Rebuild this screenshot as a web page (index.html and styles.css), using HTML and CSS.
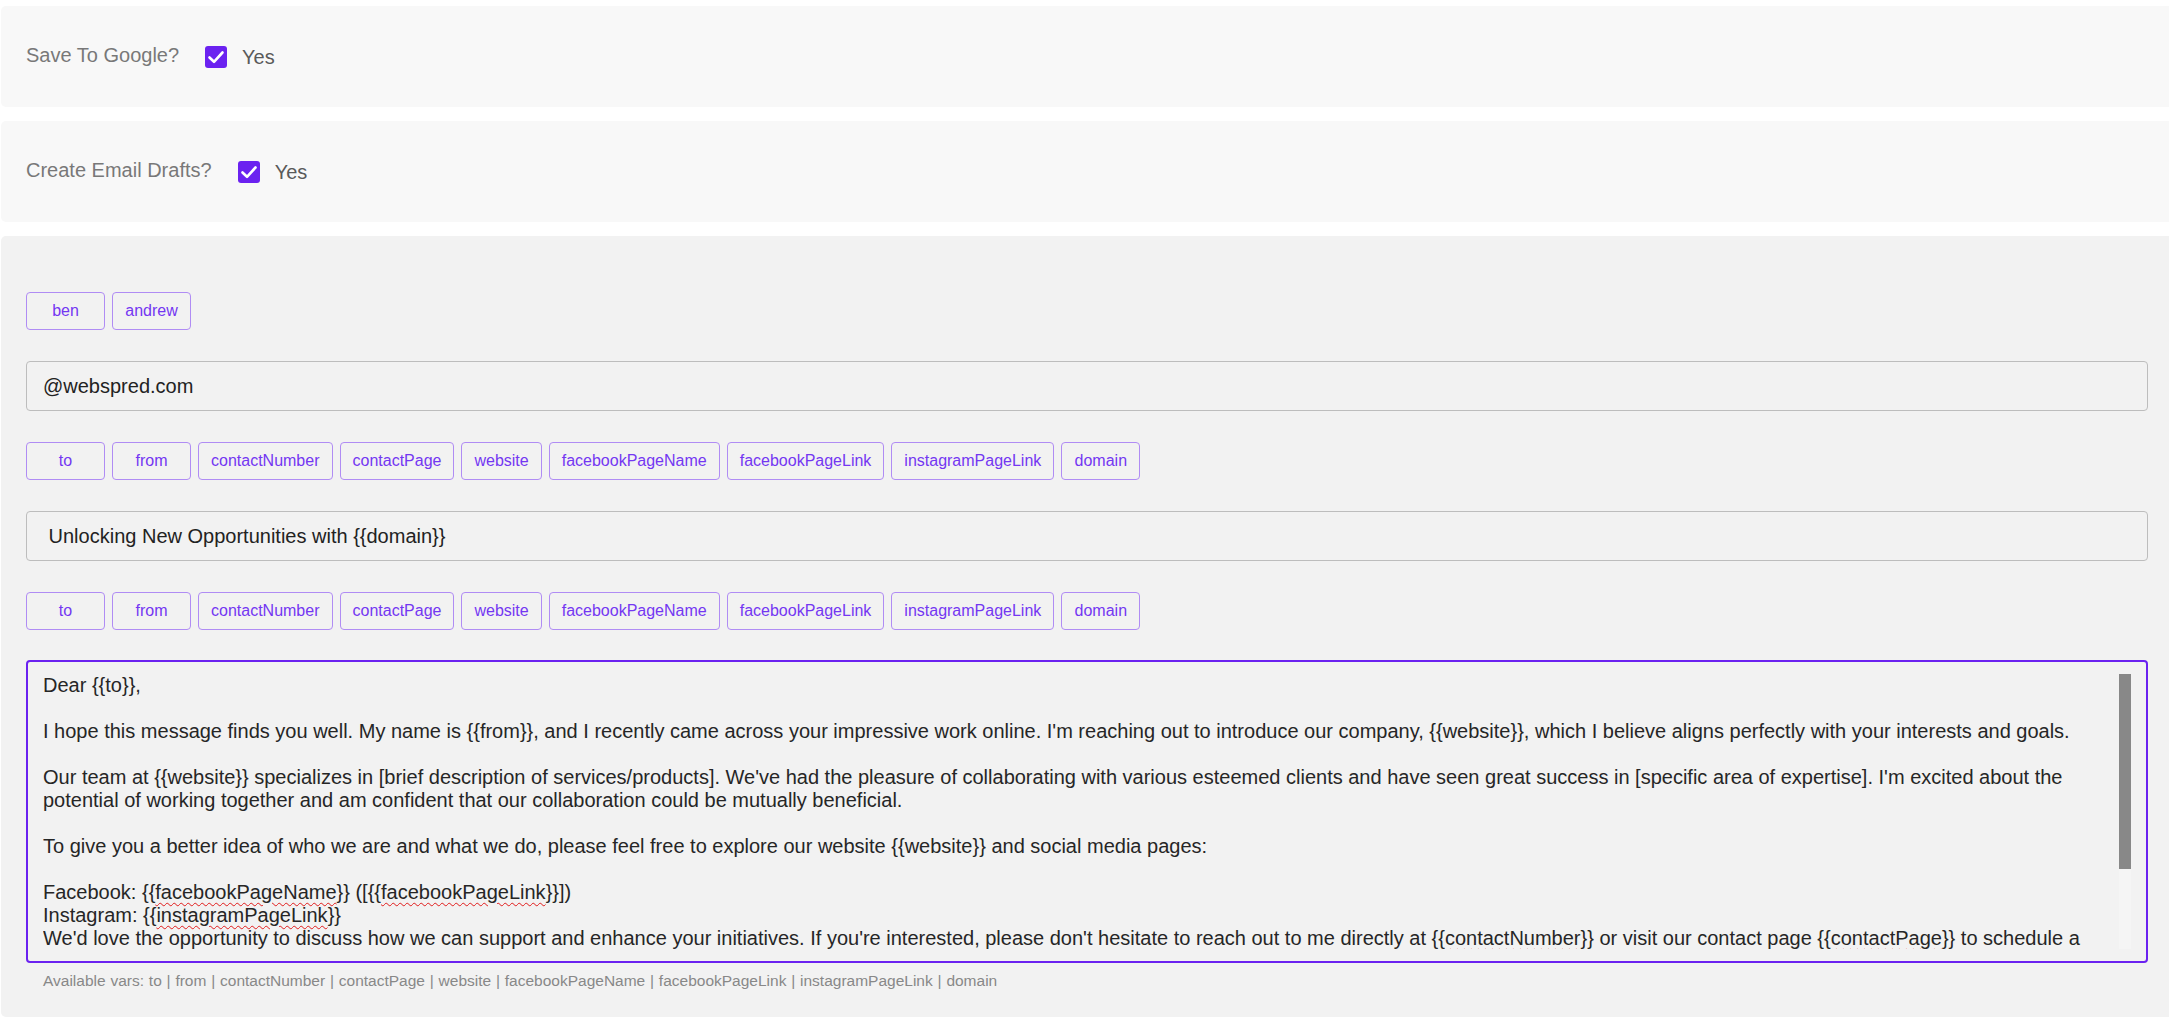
FILE: index.html
```html
<!DOCTYPE html>
<html>
<head>
<meta charset="utf-8">
<title>Settings</title>
<link rel="stylesheet" href="styles.css">
</head>
<body>
<div class="page">
  <section class="card card-light">
    <div class="option">
      <span class="option-label">Save To Google?</span>
      <span class="check"><svg viewBox="0 0 22 22" width="22" height="22"><polyline points="4.5,11.5 9,15.8 17.5,6.5" fill="none" stroke="#fff" stroke-width="2.6" stroke-linecap="round" stroke-linejoin="round"/></svg></span>
      <span class="option-value">Yes</span>
    </div>
  </section>

  <section class="card card-light">
    <div class="option">
      <span class="option-label">Create Email Drafts?</span>
      <span class="check"><svg viewBox="0 0 22 22" width="22" height="22"><polyline points="4.5,11.5 9,15.8 17.5,6.5" fill="none" stroke="#fff" stroke-width="2.6" stroke-linecap="round" stroke-linejoin="round"/></svg></span>
      <span class="option-value">Yes</span>
    </div>
  </section>

  <section class="card card-form">
    <div class="chips">
      <span class="chip">ben</span>
      <span class="chip">andrew</span>
    </div>
    <div class="field">@webspred.com</div>

    <div class="chips">
      <span class="chip">to</span>
      <span class="chip">from</span>
      <span class="chip">contactNumber</span>
      <span class="chip">contactPage</span>
      <span class="chip">website</span>
      <span class="chip">facebookPageName</span>
      <span class="chip">facebookPageLink</span>
      <span class="chip">instagramPageLink</span>
      <span class="chip">domain</span>
    </div>
    <div class="field field-subject">&nbsp;Unlocking New Opportunities with {{domain}}</div>

    <div class="chips">
      <span class="chip">to</span>
      <span class="chip">from</span>
      <span class="chip">contactNumber</span>
      <span class="chip">contactPage</span>
      <span class="chip">website</span>
      <span class="chip">facebookPageName</span>
      <span class="chip">facebookPageLink</span>
      <span class="chip">instagramPageLink</span>
      <span class="chip">domain</span>
    </div>

    <div class="editor">
      <div class="editor-body"><p>Dear {{to}},</p><p class="gap"></p><p>I hope this message finds you well. My name is {{from}}, and I recently came across your impressive work online. I'm reaching out to introduce our company, {{website}}, which I believe aligns perfectly with your interests and goals.</p><p class="gap"></p><p>Our team at {{website}} specializes in [brief description of services/products]. We've had the pleasure of collaborating with various esteemed clients and have seen great success in [specific area of expertise]. I'm excited about the potential of working together and am confident that our collaboration could be mutually beneficial.</p><p class="gap"></p><p>To give you a better idea of who we are and what we do, please feel free to explore our website {{website}} and social media pages:</p><p class="gap"></p><p>Facebook: {{<span class="typo">facebookPageName</span>}} ([{{<span class="typo">facebookPageLink</span>}}])</p><p>Instagram: {{<span class="typo">instagramPageLink</span>}}</p><p>We'd love the opportunity to discuss how we can support and enhance your initiatives. If you're interested, please don't hesitate to reach out to me directly at {{<span class="typo">contactNumber</span>}} or visit our contact page {{<span class="typo">contactPage</span>}} to schedule a</p></div>
      <div class="scroll-track"><div class="scroll-thumb"></div></div>
    </div>
    <div class="hint">Available vars: to | from | contactNumber | contactPage | website | facebookPageName | facebookPageLink | instagramPageLink | domain</div>
  </section>
</div>
</body>
</html>
```

FILE: styles.css
```css
html, body {
  margin: 0;
  padding: 0;
  background: #ffffff;
  overflow: hidden;
}

body {
  font-family: "Liberation Sans", Arial, sans-serif;
  color: #222;
}

.page {
  padding: 6px 0 0 1px;
  display: flex;
  flex-direction: column;
  gap: 14px;
}

.card {
  width: calc(100% + 4px);
  box-sizing: border-box;
  border-radius: 5px;
  padding: 0 25px;
}

.card-light {
  background: #f8f8f8;
  height: 101px;
  display: flex;
  align-items: center;
}

.option {
  display: flex;
  align-items: center;
  font-size: 20px;
  line-height: 23px;
}

.option-label {
  color: #787878;
  margin-right: 26px;
  margin-top: -3px;
}

.check {
  width: 22px;
  height: 22px;
  border-radius: 3px;
  background: #6b22f0;
  display: flex;
  margin-top: 1px;
}

.option-value {
  color: #5a5a5a;
  margin-left: 15px;
  margin-top: 1px;
}

.card-form {
  background: #f2f2f2;
  padding: 56px 25px 28px;
  display: flex;
  flex-direction: column;
}

.chips {
  display: flex;
  gap: 7px;
}

.chip {
  min-width: 79px;
  box-sizing: border-box;
  height: 38px;
  padding: 0 12px;
  border: 1px solid #b08cf4;
  border-radius: 4px;
  color: #7437f2;
  font-size: 16px;
  display: flex;
  align-items: center;
  justify-content: center;
}

.field {
  margin: 31px 0;
  height: 50px;
  box-sizing: border-box;
  border: 1px solid #bdbdbd;
  border-radius: 4px;
  padding: 0 16px;
  font-size: 20px;
  color: #222;
  display: flex;
  align-items: center;
  white-space: pre;
}

.editor {
  margin-top: 30px;
  border: 2px solid #6b22f0;
  border-radius: 4px;
  padding: 12px 15px;
  display: flex;
  height: 275px;
}

.editor-body {
  flex: 1;
  min-width: 0;
  overflow: hidden;
  font-size: 20px;
  line-height: 23px;
  color: #262626;
}

.editor-body p {
  margin: 0;
}

.editor-body p.gap {
  height: 23px;
}

.scroll-track {
  width: 12px;
  flex: none;
  background: #f5f5f5;
}

.scroll-thumb {
  height: 195px;
  background: #888888;
}

.typo {
  text-decoration: underline wavy #e01b1b;
  text-decoration-thickness: 1px;
  text-underline-offset: 3px;
}

.hint {
  margin-top: 9px;
  padding-left: 17px;
  font-size: 15.5px;
  word-spacing: 0.5px;
  line-height: 17px;
  color: #888;
}
```
